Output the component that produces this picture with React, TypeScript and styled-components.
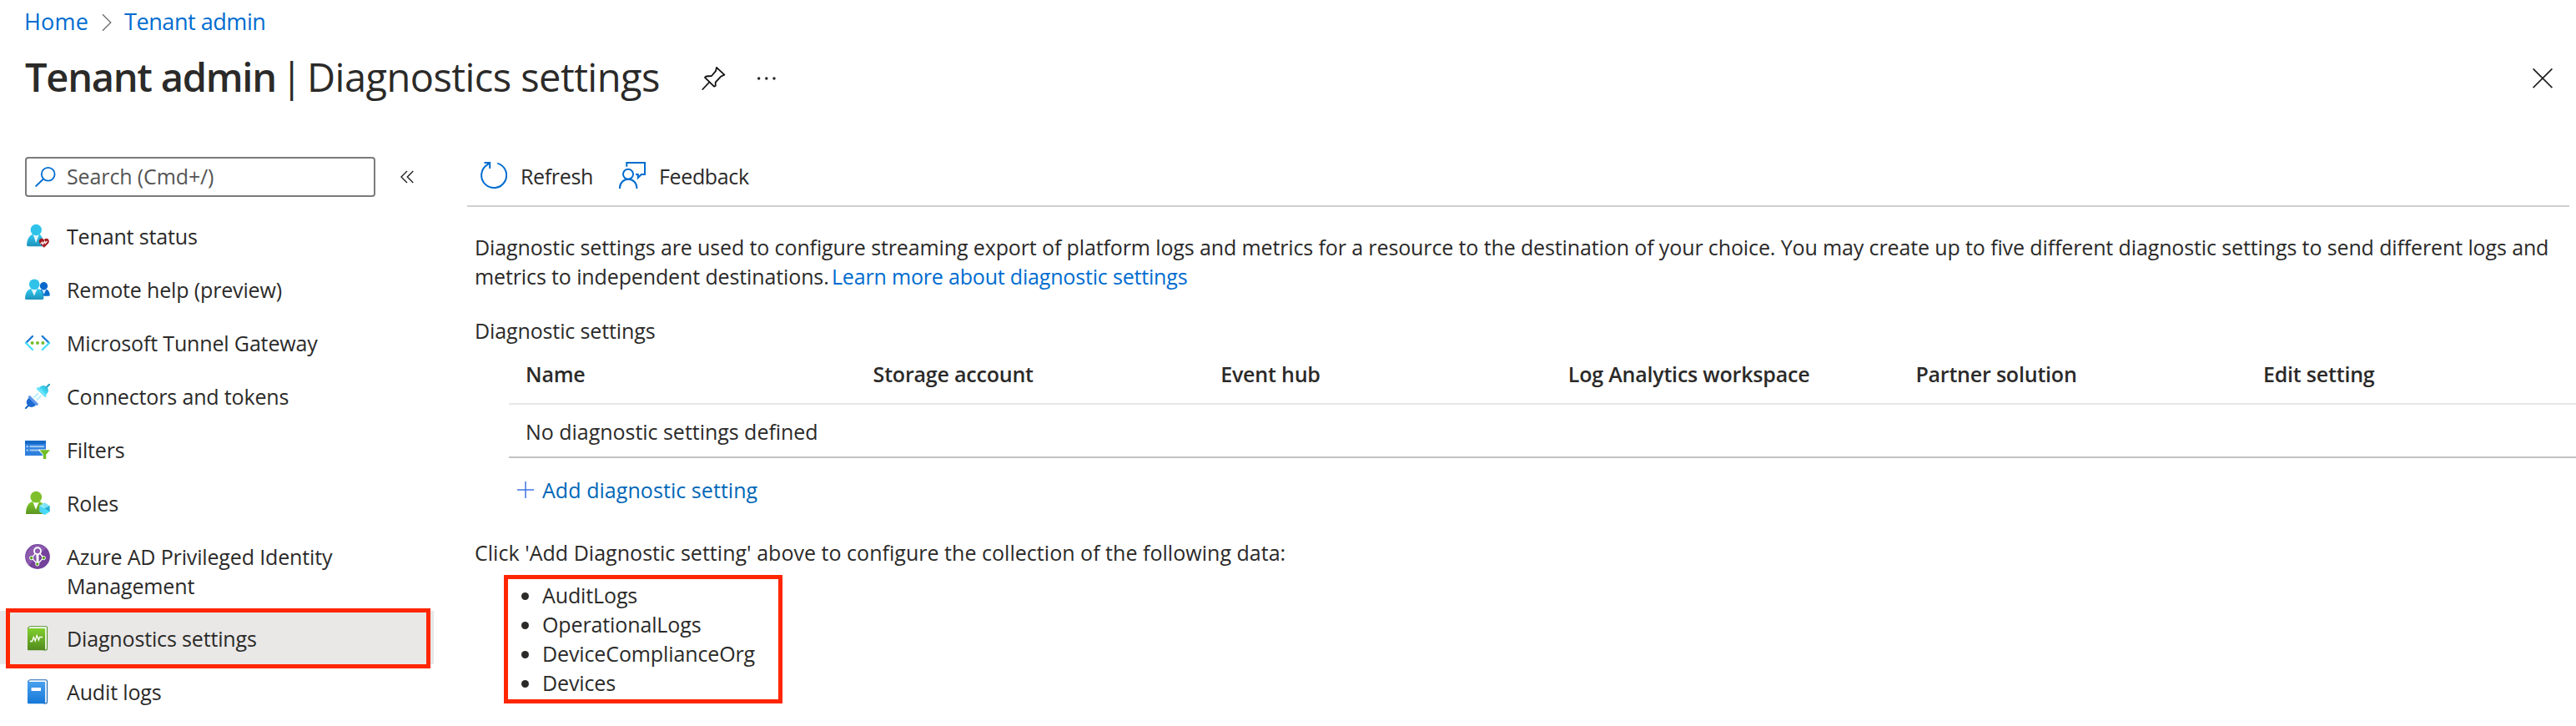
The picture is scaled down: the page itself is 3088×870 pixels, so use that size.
import React from "react";
import styled, { createGlobalStyle } from "styled-components";

const GlobalStyle = createGlobalStyle`
  html, body { margin: 0; padding: 0; background: #fff; }
  body { overflow: hidden; }
  *, *::before, *::after { box-sizing: border-box; }
`;

const Page = styled.div`
  width: 100%;
  height: 870px;
  overflow: hidden;
  display: flex;
  flex-direction: column;
  background: #fff;
  color: #2b2a29;
  font-family: "Open Sans", "Noto Sans", sans-serif;
  font-size: 25px;
  line-height: 35px;
  letter-spacing: -0.12px;
`;

const Header = styled.header`
  height: 160px;
  flex: none;
  padding: 8px 28px 0 29px;
`;

const Breadcrumb = styled.nav`
  display: flex;
  align-items: flex-start;
  font-size: 27px;
  line-height: 36px;
`;

const Crumb = styled.a<{ $spacing: number }>`
  color: #006cd0;
  letter-spacing: ${(p) => p.$spacing}px;
`;

const CrumbArrow = styled.svg`
  display: block;
  width: 12px;
  height: 22px;
  margin: 8px 15px 0 16px;
`;

const TitleRow = styled.div`
  display: flex;
  align-items: flex-start;
  margin-top: 16px;
`;

const Title = styled.h1`
  display: flex;
  gap: 6px;
  width: 765px;
  margin: 0 0 0 1px;
  font-size: 47px;
  line-height: 64px;
  font-weight: 400;
  letter-spacing: -0.55px;
  white-space: nowrap;
`;

const TitleStrong = styled.span`
  font-weight: 600;
  letter-spacing: -1.25px;
`;

const HeaderIcon = styled.svg<{ $w: number; $left?: string }>`
  display: block;
  flex: none;
  width: ${(p) => p.$w}px;
  height: 30px;
  margin-top: 19px;
  margin-left: ${(p) => p.$left ?? "0"};
`;

const Body = styled.div`
  flex: 1;
  min-height: 0;
  display: flex;
`;

const Sidebar = styled.aside`
  width: 520px;
  flex: none;
  padding-top: 28px;
`;

const SearchRow = styled.div`
  display: flex;
  padding-left: 30px;
`;

const SearchBox = styled.div`
  display: flex;
  width: 420px;
  height: 48px;
  padding: 4px 0 0 9px;
  border: 2px solid #7b7b7b;
  border-radius: 4px;
  color: #555;
`;

const SearchIcon = styled.svg`
  display: block;
  width: 28px;
  height: 28px;
  margin: 4px 11px 0 0;
`;

const Collapse = styled.svg`
  display: block;
  width: 18px;
  height: 18px;
  margin: 15px 0 0 29px;
`;

const NavList = styled.ul`
  list-style: none;
  margin: 14px 0 0;
  padding: 0;
`;

const NavItem = styled.li<{ $selected?: boolean }>`
  position: relative;
  display: flex;
  align-items: flex-start;
  min-height: 64px;
  padding: 16px 100px 12px 30px;
  background: ${(p) => (p.$selected ? "#e9e8e7" : "transparent")};
`;

const NavIcon = styled.svg`
  display: block;
  flex: none;
  width: 30px;
  height: 30px;
  margin: 2px 20px 0 0;
  overflow: visible;
`;

const NavLabel = styled.span`
  letter-spacing: -0.15px;
`;

const Highlight = styled.div`
  position: absolute;
  left: 7px;
  top: -3px;
  width: 509px;
  height: 72px;
  border: 5px solid #ff2600;
`;

const Main = styled.main`
  flex: 1;
  min-width: 0;
  padding-left: 40px;
`;

const Toolbar = styled.div`
  display: flex;
  align-items: flex-start;
  height: 88px;
  margin-right: 8px;
  padding: 34px 0 0 16px;
  border-bottom: 2px solid #cfcfcf;
`;

const ToolButton = styled.div<{ $width: number; $gap: number }>`
  display: flex;
  width: ${(p) => p.$width}px;
  gap: ${(p) => p.$gap}px;
  letter-spacing: -0.35px;
`;

const ToolIcon = styled.svg`
  display: block;
  flex: none;
  width: 32px;
  height: 32px;
`;

const Content = styled.section`
  padding: 31px 0 0 9px;
`;

const Paragraph = styled.p`
  width: 2500px;
  margin: 0;
`;

const Link = styled.a`
  margin-left: -3px;
  color: #006cd0;
  letter-spacing: -0.18px;
`;

const SubHeading = styled.div`
  margin-top: 30px;
`;

const Table = styled.div`
  margin-left: 41px;
  overflow: hidden;
`;

const HeadRow = styled.div`
  display: grid;
  grid-template-columns: repeat(6, 416.6px);
  width: 2520px;
  height: 71px;
  padding: 17px 0 0 20px;
  border-bottom: 2px solid #e6e6e6;
  font-weight: 600;
  letter-spacing: -0.2px;
`;

const EmptyRow = styled.div`
  height: 64px;
  padding: 15px 0 0 20px;
  border-bottom: 2px solid #c2c2c2;
  letter-spacing: -0.03px;
`;

const AddLink = styled.a`
  display: flex;
  margin: 21px 0 0 51px;
  color: #0067b8;
  letter-spacing: 0.06px;
`;

const PlusIcon = styled.svg`
  display: block;
  width: 20px;
  height: 20px;
  margin: 7px 10px 0 0;
`;

const Hint = styled.div`
  margin-top: 40px;
  letter-spacing: 0.03px;
`;

const LogBox = styled.ul`
  list-style: none;
  width: 334px;
  height: 154px;
  margin: 9px 0 0 35px;
  padding: 2px 0 0 16px;
  border: 5px solid #ff2600;
`;

const LogItem = styled.li`
  display: flex;

  &::before {
    content: "";
    width: 9px;
    height: 9px;
    margin: 14px 16px 0 0;
    border-radius: 50%;
    background: #2b2a29;
  }
`;

const Gradients = () => (
  <defs>
    <linearGradient id="cyanUser" x1="0" y1="0" x2="0" y2="1">
      <stop offset="0" stopColor="#30c8f0" />
      <stop offset="1" stopColor="#1f93bb" />
    </linearGradient>
    <linearGradient id="greenUser" x1="0" y1="0" x2="0" y2="1">
      <stop offset="0" stopColor="#84c92c" />
      <stop offset="1" stopColor="#5a9420" />
    </linearGradient>
    <linearGradient id="blueBook" x1="0" y1="0" x2="0" y2="1">
      <stop offset="0" stopColor="#4aa0ee" />
      <stop offset="1" stopColor="#1678d8" />
    </linearGradient>
    <linearGradient id="greenBook" x1="0" y1="0" x2="0" y2="1">
      <stop offset="0" stopColor="#80cf2c" />
      <stop offset="1" stopColor="#528a1e" />
    </linearGradient>
    <linearGradient id="cyanPlug" x1="0" y1="0" x2="0" y2="1">
      <stop offset="0" stopColor="#2bb8dc" />
      <stop offset="1" stopColor="#4be0fa" />
    </linearGradient>
  </defs>
);

const TenantStatusIcon = () => (
  <NavIcon viewBox="0 0 30 30">
    <Gradients />
    <path d="M4 27.3H20.5Q23 27.3 22.6 24.5C21.8 18 19.6 13 16 12.6H10.4C5.8 13 2.6 18.5 2 25.2Q1.8 27.3 4 27.3Z" fill="url(#cyanUser)" />
    <path d="M9.5 12.6L13.2 23L17 12.6Z" fill="#e4f6fb" />
    <circle cx="13.3" cy="7.5" r="6.7" fill="#2fc3ea" />
    <path d="M22.8 28.8L18 24Q16.2 21.7 17 19.7Q18.1 17.6 20.3 17.7Q22 17.9 22.8 19.4Q23.7 17.9 25.4 17.7Q27.7 17.6 28.6 19.7Q29.4 21.7 27.6 24Z" fill="#a4191d" />
    <path d="M18.5 24.3L20.6 22.2L21.3 24.7L23.5 21L24.1 23.7L26.6 21" fill="none" stroke="#fff" strokeWidth="1.2" />
  </NavIcon>
);

const RemoteHelpIcon = () => (
  <NavIcon viewBox="0 0 30 30">
    <path d="M17 22.8H28.5Q30 22.8 29.8 21C29.2 17.6 27.8 15 25.4 14.8H20C17.5 15 16 17.6 16 20Z" fill="#0a6dcc" />
    <path d="M20 14.8L22.7 20.8L25.4 14.8Z" fill="#d9ecfb" />
    <circle cx="22.5" cy="10.8" r="4.7" fill="#0a68cc" />
    <path d="M1.5 27H20.5Q22.8 27 22.4 24.6C21.6 18.6 19.4 14.3 15.7 14.2H7C3 14.5 .6 19 0 25Q-.1 27 1.5 27Z" fill="url(#cyanUser)" />
    <path d="M7.2 14.2L11 22.5L14.7 14.2Z" fill="#e4f6fb" />
    <circle cx="11.2" cy="8.8" r="6.3" fill="#2fc3ea" />
  </NavIcon>
);

const TunnelIcon = () => (
  <NavIcon viewBox="0 0 30 30" fill="none" strokeWidth="2.4" strokeLinecap="round">
    <path d="M9 7L1.1 15" stroke="#1878d4" />
    <path d="M1.1 15L9 23" stroke="#4be0fa" />
    <path d="M20.8 7L28.9 15" stroke="#1878d4" />
    <path d="M28.9 15L20.8 23" stroke="#4be0fa" />
    <g fill="#76bc2d" stroke="none">
      <circle cx="8.6" cy="15" r="2" />
      <circle cx="15" cy="15" r="2" />
      <circle cx="21.4" cy="15" r="2" />
    </g>
  </NavIcon>
);

const ConnectorsIcon = () => (
  <NavIcon viewBox="0 0 30 30">
    <path d="M25.5 4.5L29 .8" stroke="#1fa0be" strokeWidth="2" strokeLinecap="round" />
    <path d="M.9 29.1L4.5 25.5" stroke="#0c5fc0" strokeWidth="2" strokeLinecap="round" />
    <path d="M10.7 16.5L16 11.2M14 19.5L19.2 14.3" stroke="#b8f0fb" strokeWidth="2.2" />
    <g transform="rotate(45 21 8.8)">
      <path d="M15 9.5V7.5A6 6 0 0 1 27 7.5V9.5Z" fill="url(#cyanPlug)" />
      <rect x="13.4" y="9" width="15.2" height="3" rx="1" fill="#6be4f8" />
    </g>
    <g transform="rotate(225 8.6 21.2)">
      <path d="M2.6 21.9V19.9A6 6 0 0 1 14.6 19.9V21.9Z" fill="#1c6ad2" />
      <rect x="1" y="21.4" width="15.2" height="3" rx="1" fill="#5c97ea" />
    </g>
  </NavIcon>
);

const FiltersIcon = () => (
  <NavIcon viewBox="0 0 30 30">
    <rect x="0" y="4" width="25" height="18" fill="#2f80dd" />
    <rect x="0" y="4" width="25" height="4" fill="#1469c7" />
    <g fill="#9cc6f5">
      <rect x="1.5" y="10" width="2.5" height="2.2" />
      <rect x="5.5" y="10" width="17.5" height="2.2" />
      <rect x="1.5" y="14.4" width="2.5" height="2.2" />
      <rect x="5.5" y="14.4" width="12" height="2.2" />
    </g>
    <path d="M16.6 14.4H30.4V16L25.8 21.3V26.4H21.3V21.3L16.6 16Z" fill="#fff" />
    <path d="M17.6 15.2H30L25.2 20.7V26H21.9V20.7Z" fill="#6fbe23" />
  </NavIcon>
);

const RolesIcon = () => (
  <NavIcon viewBox="0 0 30 30">
    <path d="M1 28Q1 20 4.6 15.6Q6.6 13 9.5 13H17Q20.5 13.5 22.5 17.5Q24 21 24.4 28Z" fill="url(#greenUser)" />
    <path d="M9.3 13L13 22.8L16.8 13Z" fill="#fff" />
    <circle cx="13.3" cy="7.6" r="6.9" fill="#7fbf2c" />
    <path d="M23.4 14.6L29.5 18.2V25.2L23.4 28.9L17.2 25.2V18.2Z" fill="#4bd4f3" />
    <path d="M23.4 21.6V14.6L29.5 18.2Z" fill="#7ce3f8" />
    <path d="M23.4 21.6V14.6L17.2 18.2Z" fill="#8fe9fb" />
    <path d="M23.4 21.6L29.5 18.2V25.2Z" fill="#2aaed0" />
    <path d="M23.4 21.6L29.5 25.2L23.4 28.9Z" fill="#46e0fb" />
  </NavIcon>
);

const PrivilegedIcon = () => (
  <NavIcon viewBox="0 0 30 30">
    <circle cx="15" cy="15" r="14.9" fill="#75429b" />
    <path d="M4.5 25.5A14.9 14.9 0 0 1 25.5 4.5Z" fill="#8b5aae" />
    <circle cx="15" cy="8.2" r="4" fill="none" stroke="#fff" strokeWidth="1.9" />
    <path d="M12.3 11.3L8 16.5L14.8 24L22.2 16.5L17.7 11.3" fill="none" stroke="#fff" strokeWidth="1.3" />
    <path d="M15 12V22" stroke="#fff" strokeWidth="3" />
    <g stroke="#fff" strokeWidth="1" fill="#55a312">
      <circle cx="7.6" cy="16.6" r="2.1" />
      <circle cx="22.4" cy="16.6" r="2.1" />
      <circle cx="14.8" cy="24" r="2.1" />
    </g>
  </NavIcon>
);

const BookIcon = ({ tone }: { tone: "green" | "blue" }) => {
  const edge = tone === "green" ? "#4f8f22" : "#1c62ab";
  return (
    <NavIcon viewBox="0 0 30 30">
      <path d="M3.5 5V3Q4.5 .8 6 .8H25Q26.5 .8 26.5 2.2V27Q26.5 29 24.5 29H22" fill="#fff" stroke={edge} strokeWidth="1.1" />
      <rect x="3" y="2.9" width="21.2" height="26.3" rx="1" fill={`url(#${tone}Book)`} />
      {tone === "green" ? (
        <path d="M6 18.5H8.5L10.3 13.5L12.3 18L14.2 11.5L16.4 17L17.5 13.5H21" fill="none" stroke="#fff" strokeWidth="1.3" />
      ) : (
        <rect x="7.6" y="10" width="11.4" height="4" fill="#fff" />
      )}
    </NavIcon>
  );
};

const NAV: { label: string; icon: React.ReactNode; selected?: boolean }[] = [
  { label: "Tenant status", icon: <TenantStatusIcon /> },
  { label: "Remote help (preview)", icon: <RemoteHelpIcon /> },
  { label: "Microsoft Tunnel Gateway", icon: <TunnelIcon /> },
  { label: "Connectors and tokens", icon: <ConnectorsIcon /> },
  { label: "Filters", icon: <FiltersIcon /> },
  { label: "Roles", icon: <RolesIcon /> },
  { label: "Azure AD Privileged Identity Management", icon: <PrivilegedIcon /> },
  { label: "Diagnostics settings", icon: <BookIcon tone="green" />, selected: true },
  { label: "Audit logs", icon: <BookIcon tone="blue" /> },
];

const COLUMNS = [
  "Name",
  "Storage account",
  "Event hub",
  "Log Analytics workspace",
  "Partner solution",
  "Edit setting",
];

const LOGS = ["AuditLogs", "OperationalLogs", "DeviceComplianceOrg", "Devices"];

export default function App() {
  return (
    <Page>
      <GlobalStyle />
      <Header>
        <Breadcrumb>
          <Crumb $spacing={0.2}>Home</Crumb>
          <CrumbArrow viewBox="0 0 12 22" fill="none" stroke="#6b6b6b" strokeWidth="1.3">
            <path d="M1 1.2L10.8 11L1 20.8" />
          </CrumbArrow>
          <Crumb $spacing={-0.45}>Tenant admin</Crumb>
        </Breadcrumb>
        <TitleRow>
          <Title>
            <TitleStrong>Tenant admin</TitleStrong>
            <span>|</span>
            <span>Diagnostics settings</span>
          </Title>
          <HeaderIcon $w={30} $left="46px" viewBox="0 0 30 30" fill="none" stroke="#111" strokeWidth="1.8" strokeLinejoin="round" strokeLinecap="round">
            <path d="M18 1.8L27.4 10.6L23 12.8L16.7 19.6V24L15 24.6L4 13.8L5.5 12.5L12 12L17 6.2Z" />
            <path d="M9.3 19.5L1.3 28" />
          </HeaderIcon>
          <HeaderIcon $w={24} $left="36px" viewBox="0 0 24 30" fill="#222">
            <circle cx="2.7" cy="15" r="1.7" />
            <circle cx="11.8" cy="15" r="1.7" />
            <circle cx="21" cy="15" r="1.7" />
          </HeaderIcon>
          <HeaderIcon $w={24} $left="auto" viewBox="0 0 24 30" fill="none" stroke="#222" strokeWidth="1.7">
            <path d="M.6 3.4L23.4 26.2M23.4 3.4L.6 26.2" />
          </HeaderIcon>
        </TitleRow>
      </Header>
      <Body>
        <Sidebar>
          <SearchRow>
            <SearchBox>
              <SearchIcon viewBox="0 0 28 28" fill="none" stroke="#006cd0" strokeWidth="1.8">
                <circle cx="16.7" cy="10.7" r="7.9" />
                <path d="M11 16.5L1.6 25.5" />
              </SearchIcon>
              <span>Search (Cmd+/)</span>
            </SearchBox>
            <Collapse viewBox="0 0 18 18" fill="none" stroke="#222" strokeWidth="1.4">
              <path d="M9 2L2 9L9 16M16.3 2L9.3 9L16.3 16" />
            </Collapse>
          </SearchRow>
          <NavList>
            {NAV.map((item) => (
              <NavItem key={item.label} $selected={item.selected}>
                {item.icon}
                <NavLabel>{item.label}</NavLabel>
                {item.selected && <Highlight />}
              </NavItem>
            ))}
          </NavList>
        </Sidebar>
        <Main>
          <Toolbar>
            <ToolButton $width={166} $gap={16}>
              <ToolIcon viewBox="0 0 32 32" fill="none" stroke="#006cd0" strokeWidth="2">
                <path d="M20.3 1.6A15 15 0 1 1 8.5 3.1L11.5 1" />
                <path d="M4.5 1.1H11.2V8" />
              </ToolIcon>
              <span>Refresh</span>
            </ToolButton>
            <ToolButton $width={160} $gap={16}>
              <ToolIcon viewBox="0 0 32 32" fill="none" stroke="#006cd0" strokeWidth="2">
                <path d="M9.3 5.8V1H31V15H26.8L22.8 19V15H20" />
                <circle cx="11" cy="14.8" r="6" />
                <path d="M1 32V31A10.2 10.2 0 0 1 21.4 31V32" />
              </ToolIcon>
              <span>Feedback</span>
            </ToolButton>
          </Toolbar>
          <Content>
            <Paragraph>
              Diagnostic settings are used to configure streaming export of platform logs and metrics for a resource to
              the destination of your choice. You may create up to five different diagnostic settings to send different
              logs and metrics to independent destinations. <Link>Learn more about diagnostic settings</Link>
            </Paragraph>
            <SubHeading>Diagnostic settings</SubHeading>
            <Table>
              <HeadRow>
                {COLUMNS.map((column) => (
                  <span key={column}>{column}</span>
                ))}
              </HeadRow>
              <EmptyRow>No diagnostic settings defined</EmptyRow>
            </Table>
            <AddLink>
              <PlusIcon viewBox="0 0 20 20" stroke="#3f74e6" strokeWidth="1.5">
                <path d="M10 0V20M0 10H20" />
              </PlusIcon>
              Add diagnostic setting
            </AddLink>
            <Hint>Click 'Add Diagnostic setting' above to configure the collection of the following data:</Hint>
            <LogBox>
              {LOGS.map((log) => (
                <LogItem key={log}>{log}</LogItem>
              ))}
            </LogBox>
          </Content>
        </Main>
      </Body>
    </Page>
  );
}
